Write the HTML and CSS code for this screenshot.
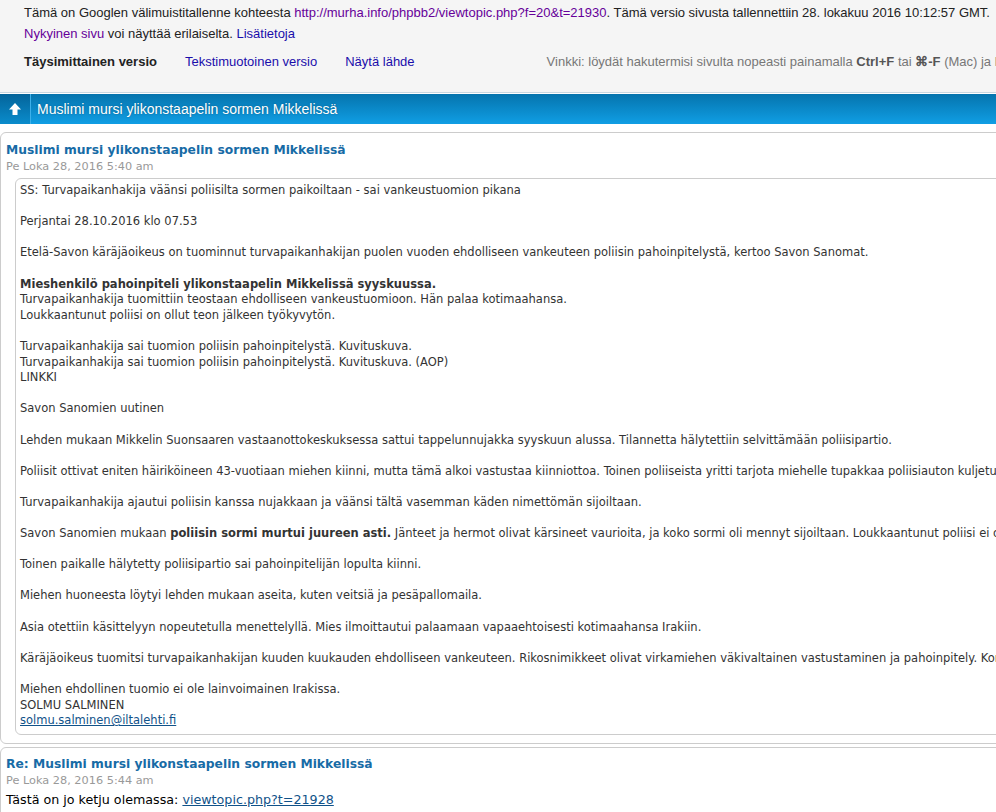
FILE: index.html
```html
<!DOCTYPE html>
<html>
<head>
<meta charset="utf-8">
<title>Muslimi mursi ylikonstaapelin sormen Mikkelissä</title>
<link rel="stylesheet" href="styles.css">
</head>
<body>

<div class="cache-head">
  <div class="cache-info">
    Tämä on Googlen välimuistitallenne kohteesta <a class="visited" href="#">http://murha.info/phpbb2/viewtopic.php?f=20&amp;t=21930</a>. Tämä versio sivusta tallennettiin 28. lokakuu 2016 10:12:57 GMT.<br>
    <a class="visited" href="#">Nykyinen sivu</a> voi näyttää erilaiselta. <a href="#">Lisätietoja</a>
  </div>
  <div class="cache-tabs">
    <span class="tab-current">Täysimittainen versio</span>
    <a href="#">Tekstimuotoinen versio</a>
    <a href="#">Näytä lähde</a>
    <span class="tip">Vinkki: löydät hakutermisi sivulta nopeasti painamalla <b>Ctrl+F</b> tai <b>⌘-F</b> (Mac) ja käytä etsintäpalkkia.</span>
  </div>
</div>

<div class="topic-bar">
  <a class="up-icon" href="#">
    <svg width="14" height="14" viewBox="0 0 14 14"><path d="M7 1 L13 7.5 L9.5 7.5 L9.5 13 L4.5 13 L4.5 7.5 L1 7.5 Z" fill="#fff"/></svg>
  </a>
  <span class="topic-title">Muslimi mursi ylikonstaapelin sormen Mikkelissä</span>
</div>

<div class="posts">
  <div class="post">
    <div class="post-title">Muslimi mursi ylikonstaapelin sormen Mikkelissä</div>
    <div class="post-date">Pe Loka 28, 2016 5:40 am</div>
    <div class="quote">
      SS: Turvapaikanhakija väänsi poliisilta sormen paikoiltaan - sai vankeustuomion pikana<br>
      <br>
      Perjantai 28.10.2016 klo 07.53<br>
      <br>
      Etelä-Savon käräjäoikeus on tuominnut turvapaikanhakijan puolen vuoden ehdolliseen vankeuteen poliisin pahoinpitelystä, kertoo Savon Sanomat.<br>
      <br>
      <b>Mieshenkilö pahoinpiteli ylikonstaapelin Mikkelissä syyskuussa.</b><br>
      Turvapaikanhakija tuomittiin teostaan ehdolliseen vankeustuomioon. Hän palaa kotimaahansa.<br>
      Loukkaantunut poliisi on ollut teon jälkeen työkyvytön.<br>
      <br>
      Turvapaikanhakija sai tuomion poliisin pahoinpitelystä. Kuvituskuva.<br>
      Turvapaikanhakija sai tuomion poliisin pahoinpitelystä. Kuvituskuva. (AOP)<br>
      LINKKI<br>
      <br>
      Savon Sanomien uutinen<br>
      <br>
      Lehden mukaan Mikkelin Suonsaaren vastaanottokeskuksessa sattui tappelunnujakka syyskuun alussa. Tilannetta hälytettiin selvittämään poliisipartio.<br>
      <br>
      Poliisit ottivat eniten häiriköineen 43-vuotiaan miehen kiinni, mutta tämä alkoi vastustaa kiinniottoa. Toinen poliiseista yritti tarjota miehelle tupakkaa poliisiauton kuljetustilassa.<br>
      <br>
      Turvapaikanhakija ajautui poliisin kanssa nujakkaan ja väänsi tältä vasemman käden nimettömän sijoiltaan.<br>
      <br>
      Savon Sanomien mukaan <b>poliisin sormi murtui juureen asti.</b> Jänteet ja hermot olivat kärsineet vaurioita, ja koko sormi oli mennyt sijoiltaan. Loukkaantunut poliisi ei ole vielä palannut töihin.<br>
      <br>
      Toinen paikalle hälytetty poliisipartio sai pahoinpitelijän lopulta kiinni.<br>
      <br>
      Miehen huoneesta löytyi lehden mukaan aseita, kuten veitsiä ja pesäpallomaila.<br>
      <br>
      Asia otettiin käsittelyyn nopeutetulla menettelyllä. Mies ilmoittautui palaamaan vapaaehtoisesti kotimaahansa Irakiin.<br>
      <br>
      Käräjäoikeus tuomitsi turvapaikanhakijan kuuden kuukauden ehdolliseen vankeuteen. Rikosnimikkeet olivat virkamiehen väkivaltainen vastustaminen ja pahoinpitely. Korvauksia mies joutuu maksamaan.<br>
      <br>
      Miehen ehdollinen tuomio ei ole lainvoimainen Irakissa.<br>
      SOLMU SALMINEN<br>
      <a href="#">solmu.salminen@iltalehti.fi</a>
    </div>
  </div>

  <div class="post">
    <div class="post-title">Re: Muslimi mursi ylikonstaapelin sormen Mikkelissä</div>
    <div class="post-date">Pe Loka 28, 2016 5:44 am</div>
    <div class="post-text">Tästä on jo ketju olemassa: <a href="#">viewtopic.php?t=21928</a></div>
  </div>
</div>

</body>
</html>
```

FILE: styles.css
```css
html {
  overflow: hidden;
}

body {
  margin: 0;
  padding: 0;
  width: 1500px;
  background-color: #fff;
  font-family: "DejaVu Sans", Verdana, sans-serif;
}

a {
  color: #105289;
}

/* google cache header */
.cache-head {
  background-color: #f5f5f5;
  border-bottom: 1px solid #c9d7e0;
  font-family: "Liberation Sans", Arial, sans-serif;
  font-size: 13px;
  color: #222;
  padding: 2px 0 0 24px;
  height: 93px;
  box-sizing: border-box;
}

.cache-head a {
  color: #1a0dab;
  text-decoration: none;
}

.cache-head a.visited {
  color: #660099;
}

.cache-info {
  line-height: 21px;
}

.cache-tabs {
  display: flex;
  align-items: baseline;
  margin-top: 9px;
  line-height: 18px;
}

.tab-current {
  font-weight: bold;
  margin-right: 28px;
}

.cache-tabs a {
  margin-right: 28px;
}

.tip {
  margin-left: 104px;
  color: #777;
}

.tip b {
  color: #555;
}

/* topic bar */
.topic-bar {
  display: flex;
  align-items: center;
  height: 30px;
  margin-top: 1px;
  background: linear-gradient(#0574ad, #109ee4);
}

.up-icon {
  display: flex;
  align-items: center;
  justify-content: center;
  width: 30px;
  height: 30px;
  background: linear-gradient(#04649a, #0a8ccc);
  border-right: 1px solid #3cb0ea;
}

.topic-title {
  margin-left: 6px;
  color: #fff;
  font-family: "Liberation Sans", Arial, sans-serif;
  font-size: 14px;
  text-shadow: 0 0 2px rgba(0, 0, 0, 0.3);
}

/* posts */
.posts {
  padding-top: 8px;
}

.post {
  border: 1px solid #ccc;
  border-radius: 6px;
  padding: 9px 5px 8px 5px;
  margin-bottom: 3px;
}

.post-title {
  color: #176ba6;
  font-weight: bold;
  font-size: 12.3px;
  line-height: 17px;
}

.post-date {
  color: #999;
  font-size: 11.3px;
  line-height: 15px;
}

.quote {
  margin: 4px 0 0 9px;
  border: 1px solid #ccc;
  border-radius: 6px;
  padding: 4px 4px 5px 4px;
  color: #333;
  font-size: 11.5px;
  line-height: 15.6px;
}

.quote a {
  color: #105289;
}

.post + .post {
  padding-top: 8px;
}

.post-text {
  margin-top: 3px;
  color: #000;
  font-size: 12.7px;
  line-height: 18px;
}
```
